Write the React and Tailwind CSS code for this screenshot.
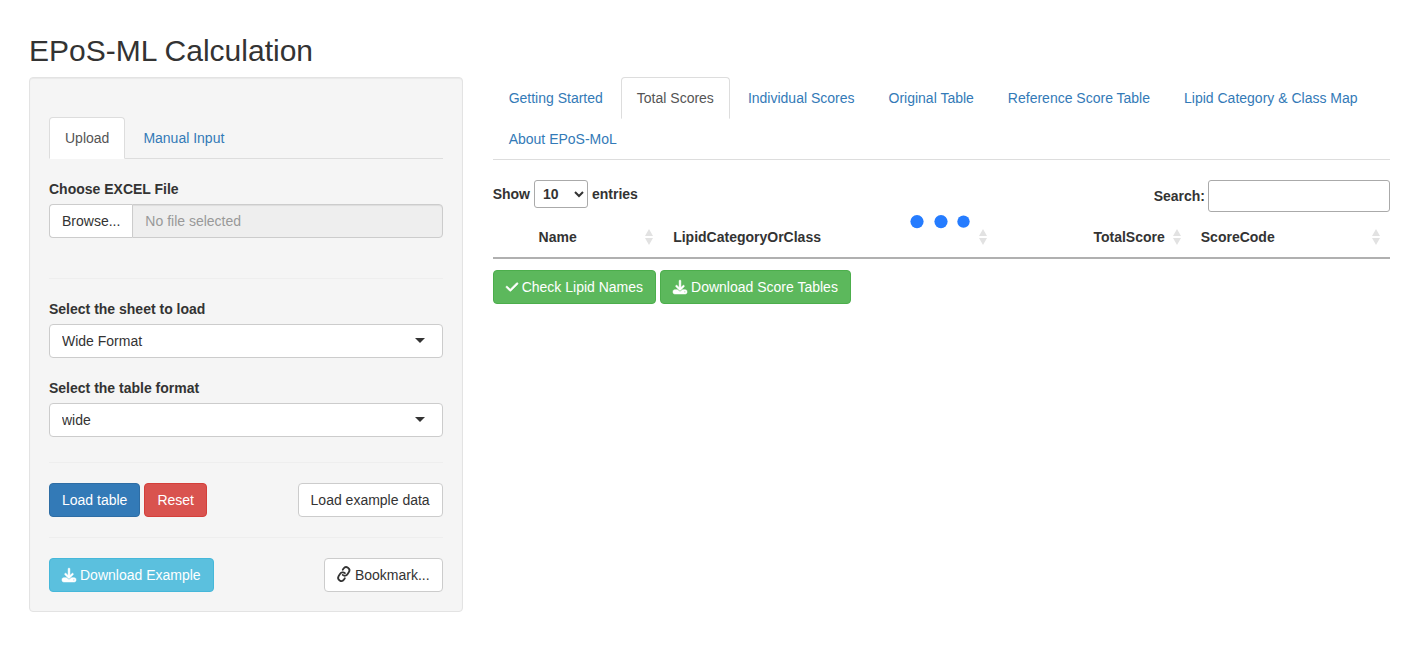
import { FaCheck, FaDownload } from "react-icons/fa6";
import { Link as LinkIcon } from "lucide-react";

const mainTabs = [
  "Getting Started",
  "Total Scores",
  "Individual Scores",
  "Original Table",
  "Reference Score Table",
  "Lipid Category & Class Map",
  "About EPoS-MoL",
];

const buttonTones = {
  default: "border-[#ccc] bg-white text-[#333]",
  primary: "border-[#2e6da4] bg-[#337ab7] text-white",
  danger: "border-[#d43f3a] bg-[#d9534f] text-white",
  info: "border-[#46b8da] bg-[#5bc0de] text-white",
  success: "border-[#4cae4c] bg-[#5cb85c] text-white",
};

function Button({ tone = "default", icon, children }) {
  return (
    <button
      type="button"
      className={`flex items-center gap-1 whitespace-nowrap rounded border px-3 py-1.5 ${buttonTones[tone]}`}
    >
      {icon}
      {children}
    </button>
  );
}

function Tabs({ items, active }) {
  return (
    <ul className="flex flex-wrap border-b border-[#ddd]">
      {items.map((item) => (
        <li key={item} className="-mb-px">
          <a
            href="#"
            aria-current={item === active ? "page" : undefined}
            className={`mr-0.5 block rounded-t border px-[15px] py-2.5 ${
              item === active
                ? "border-[#ddd] border-b-transparent bg-white text-[#555]"
                : "border-transparent text-[#337ab7]"
            }`}
          >
            {item}
          </a>
        </li>
      ))}
    </ul>
  );
}

function SelectField({ id, label, options }) {
  return (
    <div>
      <label htmlFor={id} className="mb-[5px] block font-bold">
        {label}
      </label>
      <div className="relative">
        <select
          id={id}
          className="block h-[34px] w-full appearance-none rounded border border-[#ccc] bg-white px-3"
        >
          {options.map((o) => (
            <option key={o}>{o}</option>
          ))}
        </select>
        <svg
          viewBox="0 0 10 5"
          className="pointer-events-none absolute top-3.5 right-[18px] h-[5px] w-2.5 fill-[#333]"
          aria-hidden="true"
        >
          <path d="M0 0h10L5 5z" />
        </svg>
      </div>
    </div>
  );
}

function SortHeader({ children, align = "text-left" }) {
  return (
    <th scope="col" className={`border-b-2 border-[#b0b0b0] p-2.5 font-bold ${align}`}>
      <div className="flex items-center gap-2">
        <span className="grow">{children}</span>
        <svg viewBox="0 0 8 16" className="h-4 w-2 shrink-0 fill-[#e2e2e2]" aria-hidden="true">
          <path d="M4 0l4 7H0zM4 16l4-7H0z" />
        </svg>
      </div>
    </th>
  );
}

function Divider() {
  return <hr className="my-5 border-[#eee]" />;
}

export default function App() {
  return (
    <div className="px-[29px] pt-[34px] pb-8 font-['Liberation_Sans',Arial,sans-serif] text-sm leading-5 text-[#333]">
      <h2 className="mb-2.5 text-[30px] leading-[33px] font-medium">EPoS-ML Calculation</h2>
      <div className="grid grid-cols-12 items-start gap-x-[30px]">
        <form className="col-span-4 rounded border border-[#e3e3e3] bg-[#f5f5f5] px-[19px] pt-[39px] pb-[19px] shadow-[inset_0_1px_1px_rgba(0,0,0,0.05)]">
          <Tabs items={["Upload", "Manual Input"]} active="Upload" />
          <div className="mt-5 mb-10">
            <label htmlFor="file" className="mb-[5px] block font-bold">
              Choose EXCEL File
            </label>
            <div className="relative flex">
              <label
                htmlFor="file"
                className="rounded-l border border-r-0 border-[#ccc] bg-white px-3 py-1.5"
              >
                Browse...
              </label>
              <input id="file" type="file" className="sr-only" />
              <input
                type="text"
                readOnly
                aria-label="Selected file"
                placeholder="No file selected"
                className="h-[34px] min-w-0 grow rounded-r border border-[#ccc] bg-[#eee] px-3 shadow-[inset_0_1px_1px_rgba(0,0,0,0.075)] placeholder:text-[#999]"
              />
            </div>
          </div>
          <Divider />
          <div className="mb-[25px] flex flex-col gap-5">
            <SelectField id="sheet" label="Select the sheet to load" options={["Wide Format", "Long Format"]} />
            <SelectField id="format" label="Select the table format" options={["wide", "long"]} />
          </div>
          <Divider />
          <div className="flex justify-between">
            <div className="flex gap-1">
              <Button tone="primary">Load table</Button>
              <Button tone="danger">Reset</Button>
            </div>
            <Button>Load example data</Button>
          </div>
          <Divider />
          <div className="flex justify-between">
            <Button tone="info" icon={<FaDownload className="size-3.5 overflow-visible [stroke-width:18]" aria-hidden="true" />}>
              Download Example
            </Button>
            <Button
              icon={
                <LinkIcon
                  viewBox="1 2.5 22 22"
                  className="size-3.5 -rotate-12 overflow-visible"
                  strokeWidth={2.8}
                  aria-hidden="true"
                />
              }
            >
              Bookmark...
            </Button>
          </div>
        </form>

        <main className="col-span-8">
          <Tabs items={mainTabs} active="Total Scores" />
          <div className="relative mt-5">
            <div className="flex items-start justify-between font-bold">
              <label className="flex items-center gap-1">
                Show
                <select className="h-7 rounded-[3px] border border-[#aaa] bg-transparent p-1 font-bold">
                  <option>10</option>
                  <option>25</option>
                  <option>50</option>
                  <option>100</option>
                </select>
                entries
              </label>
              <label className="flex items-center gap-[3px]">
                Search:
                <input type="search" className="h-8 w-[182px] rounded-[3px] border border-[#aaa] p-[5px] font-normal" />
              </label>
            </div>
            <table className="mt-[5px] w-full table-fixed border-separate border-spacing-0">
              <colgroup>
                <col className="w-[4%]" />
                <col className="w-[15%]" />
                <col className="w-[37.2%]" />
                <col className="w-[21.6%]" />
                <col className="w-[22.2%]" />
              </colgroup>
              <thead>
                <tr>
                  <td className="border-b-2 border-[#b0b0b0]" />
                  <SortHeader>Name</SortHeader>
                  <SortHeader>LipidCategoryOrClass</SortHeader>
                  <SortHeader align="text-right">TotalScore</SortHeader>
                  <SortHeader>ScoreCode</SortHeader>
                </tr>
              </thead>
            </table>
            <svg
              viewBox="0 0 62 14"
              className="absolute top-[35px] left-1/2 h-3.5 w-[62px] -translate-x-1/2 fill-[#257cff]"
              role="status"
              aria-label="Loading"
            >
              <circle cx="7" cy="6.6" r="6.6" />
              <circle cx="31" cy="6.6" r="6.6" />
              <circle cx="53.5" cy="6.6" r="6.2" />
            </svg>
          </div>
          <div className="mt-[11px] flex gap-1">
            <Button tone="success" icon={<FaCheck className="h-3.5 w-3 overflow-visible [stroke-width:24]" aria-hidden="true" />}>
              Check Lipid Names
            </Button>
            <Button tone="success" icon={<FaDownload className="size-3.5 overflow-visible [stroke-width:18]" aria-hidden="true" />}>
              Download Score Tables
            </Button>
          </div>
        </main>
      </div>
    </div>
  );
}
